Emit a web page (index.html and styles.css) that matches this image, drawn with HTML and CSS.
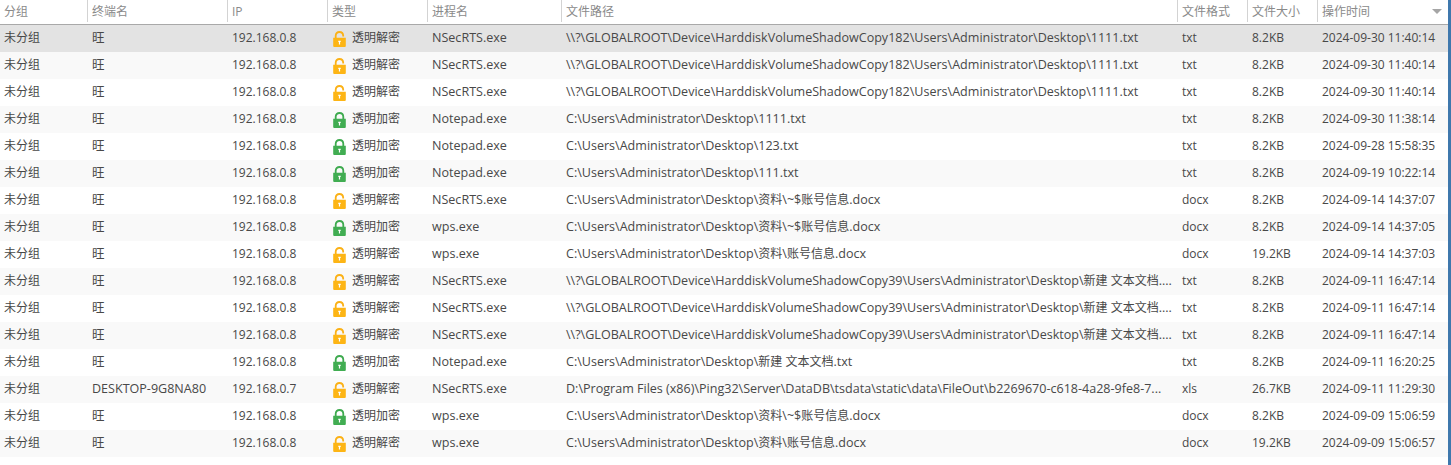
FILE: index.html
```html
<!DOCTYPE html>
<html lang="zh">
<head>
<meta charset="utf-8">
<title>文件操作日志</title>
<link rel="stylesheet" href="styles.css">
</head>
<body>
<svg class="defs" width="0" height="0" aria-hidden="true">
  <symbol id="lock-open" viewBox="0 0 13 16">
    <path d="M2.700 7V4.800C2.700 2.400 4.300 1 6.400 1s3.800 1.400 3.800 3.800V5.600" fill="none" stroke="#fbb116" stroke-width="1.800"/>
    <path d="M0.200 6.800h12.600v8.200a1 1 0 0 1-1 1H1.200a1 1 0 0 1-1-1z" fill="#fdb515"/>
    <path d="M5.300 9.800h2.400v1.200h-.6v2.400H5.900v-2.400h-.6z" fill="#fff"/>
  </symbol>
  <symbol id="lock-closed" viewBox="0 0 13 16">
    <path d="M2.700 7.500V4.800C2.700 2.400 4.300 1 6.500 1s3.800 1.400 3.800 3.800v2.700" fill="none" stroke="#3eaa4f" stroke-width="1.800"/>
    <path d="M0.200 6.800h12.600v8.200a1 1 0 0 1-1 1H1.200a1 1 0 0 1-1-1z" fill="#41ad52"/>
    <path d="M5.300 9.800h2.400v1.200h-.6v2.400H5.900v-2.400h-.6z" fill="#fff"/>
  </symbol>
</svg>
<main class="frame">
<table class="log">
  <colgroup>
    <col class="c-group"><col class="c-host"><col class="c-ip"><col class="c-type"><col class="c-proc"><col class="c-path"><col class="c-fmt"><col class="c-size"><col class="c-time">
  </colgroup>
  <thead>
    <tr>
      <th class="first">分组</th><th>终端名</th><th>IP</th><th>类型</th><th>进程名</th><th>文件路径</th><th>文件格式</th><th>文件大小</th>
      <th>操作时间<span class="sort"></span></th>
    </tr>
  </thead>
  <tbody>
    <tr class="selected"><td>未分组</td><td class="wide">旺</td><td>192.168.0.8</td><td><span class="kind"><svg class="lock"><use href="#lock-open"/></svg>透明解密</span></td><td class="wide">NSecRTS.exe</td><td class="wide">\\?\GLOBALROOT\Device\HarddiskVolumeShadowCopy182\Users\Administrator\Desktop\1111.txt</td><td>txt</td><td>8.2KB</td><td>2024-09-30 11:40:14</td></tr>
    <tr><td>未分组</td><td class="wide">旺</td><td>192.168.0.8</td><td><span class="kind"><svg class="lock"><use href="#lock-open"/></svg>透明解密</span></td><td class="wide">NSecRTS.exe</td><td class="wide">\\?\GLOBALROOT\Device\HarddiskVolumeShadowCopy182\Users\Administrator\Desktop\1111.txt</td><td>txt</td><td>8.2KB</td><td>2024-09-30 11:40:14</td></tr>
    <tr><td>未分组</td><td class="wide">旺</td><td>192.168.0.8</td><td><span class="kind"><svg class="lock"><use href="#lock-open"/></svg>透明解密</span></td><td class="wide">NSecRTS.exe</td><td class="wide">\\?\GLOBALROOT\Device\HarddiskVolumeShadowCopy182\Users\Administrator\Desktop\1111.txt</td><td>txt</td><td>8.2KB</td><td>2024-09-30 11:40:14</td></tr>
    <tr><td>未分组</td><td class="wide">旺</td><td>192.168.0.8</td><td><span class="kind"><svg class="lock"><use href="#lock-closed"/></svg>透明加密</span></td><td class="wide">Notepad.exe</td><td class="wide">C:\Users\Administrator\Desktop\1111.txt</td><td>txt</td><td>8.2KB</td><td>2024-09-30 11:38:14</td></tr>
    <tr><td>未分组</td><td class="wide">旺</td><td>192.168.0.8</td><td><span class="kind"><svg class="lock"><use href="#lock-closed"/></svg>透明加密</span></td><td class="wide">Notepad.exe</td><td class="wide">C:\Users\Administrator\Desktop\123.txt</td><td>txt</td><td>8.2KB</td><td>2024-09-28 15:58:35</td></tr>
    <tr><td>未分组</td><td class="wide">旺</td><td>192.168.0.8</td><td><span class="kind"><svg class="lock"><use href="#lock-closed"/></svg>透明加密</span></td><td class="wide">Notepad.exe</td><td class="wide">C:\Users\Administrator\Desktop\111.txt</td><td>txt</td><td>8.2KB</td><td>2024-09-19 10:22:14</td></tr>
    <tr><td>未分组</td><td class="wide">旺</td><td>192.168.0.8</td><td><span class="kind"><svg class="lock"><use href="#lock-open"/></svg>透明解密</span></td><td class="wide">NSecRTS.exe</td><td class="wide">C:\Users\Administrator\Desktop\<span class="cjk">资料</span>\~$<span class="cjk">账号信息</span>.docx</td><td>docx</td><td>8.2KB</td><td>2024-09-14 14:37:07</td></tr>
    <tr><td>未分组</td><td class="wide">旺</td><td>192.168.0.8</td><td><span class="kind"><svg class="lock"><use href="#lock-closed"/></svg>透明加密</span></td><td class="wide">wps.exe</td><td class="wide">C:\Users\Administrator\Desktop\<span class="cjk">资料</span>\~$<span class="cjk">账号信息</span>.docx</td><td>docx</td><td>8.2KB</td><td>2024-09-14 14:37:05</td></tr>
    <tr><td>未分组</td><td class="wide">旺</td><td>192.168.0.8</td><td><span class="kind"><svg class="lock"><use href="#lock-open"/></svg>透明解密</span></td><td class="wide">wps.exe</td><td class="wide">C:\Users\Administrator\Desktop\<span class="cjk">资料</span>\<span class="cjk">账号信息</span>.docx</td><td>docx</td><td>19.2KB</td><td>2024-09-14 14:37:03</td></tr>
    <tr><td>未分组</td><td class="wide">旺</td><td>192.168.0.8</td><td><span class="kind"><svg class="lock"><use href="#lock-open"/></svg>透明解密</span></td><td class="wide">NSecRTS.exe</td><td class="wide">\\?\GLOBALROOT\Device\HarddiskVolumeShadowCopy39\Users\Administrator\Desktop\<span class="cjk">新建 文本文档</span>....</td><td>txt</td><td>8.2KB</td><td>2024-09-11 16:47:14</td></tr>
    <tr><td>未分组</td><td class="wide">旺</td><td>192.168.0.8</td><td><span class="kind"><svg class="lock"><use href="#lock-open"/></svg>透明解密</span></td><td class="wide">NSecRTS.exe</td><td class="wide">\\?\GLOBALROOT\Device\HarddiskVolumeShadowCopy39\Users\Administrator\Desktop\<span class="cjk">新建 文本文档</span>....</td><td>txt</td><td>8.2KB</td><td>2024-09-11 16:47:14</td></tr>
    <tr><td>未分组</td><td class="wide">旺</td><td>192.168.0.8</td><td><span class="kind"><svg class="lock"><use href="#lock-open"/></svg>透明解密</span></td><td class="wide">NSecRTS.exe</td><td class="wide">\\?\GLOBALROOT\Device\HarddiskVolumeShadowCopy39\Users\Administrator\Desktop\<span class="cjk">新建 文本文档</span>....</td><td>txt</td><td>8.2KB</td><td>2024-09-11 16:47:14</td></tr>
    <tr><td>未分组</td><td class="wide">旺</td><td>192.168.0.8</td><td><span class="kind"><svg class="lock"><use href="#lock-closed"/></svg>透明加密</span></td><td class="wide">Notepad.exe</td><td class="wide">C:\Users\Administrator\Desktop\<span class="cjk">新建 文本文档</span>.txt</td><td>txt</td><td>8.2KB</td><td>2024-09-11 16:20:25</td></tr>
    <tr><td>未分组</td><td class="wide">DESKTOP-9G8NA80</td><td>192.168.0.7</td><td><span class="kind"><svg class="lock"><use href="#lock-open"/></svg>透明解密</span></td><td class="wide">NSecRTS.exe</td><td class="wide">D:\Program Files (x86)\Ping32\Server\DataDB\tsdata\static\data\FileOut\b2269670-c618-4a28-9fe8-7...</td><td>xls</td><td>26.7KB</td><td>2024-09-11 11:29:30</td></tr>
    <tr><td>未分组</td><td class="wide">旺</td><td>192.168.0.8</td><td><span class="kind"><svg class="lock"><use href="#lock-closed"/></svg>透明加密</span></td><td class="wide">wps.exe</td><td class="wide">C:\Users\Administrator\Desktop\<span class="cjk">资料</span>\~$<span class="cjk">账号信息</span>.docx</td><td>docx</td><td>8.2KB</td><td>2024-09-09 15:06:59</td></tr>
    <tr><td>未分组</td><td class="wide">旺</td><td>192.168.0.8</td><td><span class="kind"><svg class="lock"><use href="#lock-open"/></svg>透明解密</span></td><td class="wide">wps.exe</td><td class="wide">C:\Users\Administrator\Desktop\<span class="cjk">资料</span>\<span class="cjk">账号信息</span>.docx</td><td>docx</td><td>19.2KB</td><td>2024-09-09 15:06:57</td></tr>
  </tbody>
</table>
</main>
</body>
</html>
```
FILE: styles.css
```css
* { box-sizing: border-box; }
html, body { margin: 0; height: 100%; background: #fff; overflow: hidden; }
.defs { display: block; height: 0; }
.frame {
  height: 465px;
  border-right: 3px solid #3f78ad;
}
.log {
  width: 100%;
  table-layout: fixed;
  border-collapse: separate;
  border-spacing: 0;
  font: 12px/25px "Open Sans", "Noto Sans CJK SC", sans-serif;
  color: #484848;
}
.c-group { width: 87px; }
.c-host { width: 140px; }
.c-ip { width: 100px; }
.c-type { width: 100px; }
.c-proc { width: 134px; }
.c-path { width: 616px; }
.c-fmt { width: 70px; }
.c-size { width: 70px; }
th {
  height: 25px;
  padding: 0 0 2px 5px;
  text-align: left;
  font-weight: 400;
  line-height: 21px;
  color: #8a8a8a;
  position: relative;
  border-bottom: 1px solid #a9a9a9;
  white-space: nowrap;
  background: linear-gradient(#d3d3d3, #d3d3d3) left 0 / 1px 22px no-repeat;
}
th.first { padding-left: 4px; background: none; }
.sort {
  position: absolute;
  right: 6px;
  top: 9px;
  width: 0;
  height: 0;
  border-left: 5px solid transparent;
  border-right: 5px solid transparent;
  border-top: 5px solid #a5a5a5;
}
td {
  height: 27px;
  padding: 0 0 2px 5px;
  white-space: nowrap;
  overflow: hidden;
}
td:first-child { padding-left: 4px; }
td.wide { font-size: 12.55px; }
.cjk { font-size: 12px; }
tbody tr:nth-child(even) { background: #f9f9f9; }
tbody tr.selected { background: #e3e3e3; }
.kind { display: flex; align-items: center; gap: 6px; }
.lock { width: 13px; height: 16px; flex: none; margin: 2px 0 0 1px; }
```
